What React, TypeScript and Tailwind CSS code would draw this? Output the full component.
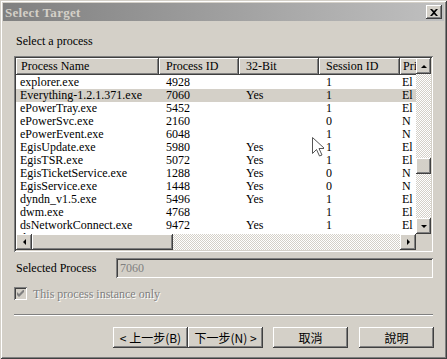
import React from 'react';

const rows = [
  ['explorer.exe', '4928', '', '1', 'El'],
  ['Everything-1.2.1.371.exe', '7060', 'Yes', '1', 'El'],
  ['ePowerTray.exe', '5452', '', '1', 'El'],
  ['ePowerSvc.exe', '2160', '', '0', 'N'],
  ['ePowerEvent.exe', '6048', '', '1', 'N'],
  ['EgisUpdate.exe', '5980', 'Yes', '1', 'El'],
  ['EgisTSR.exe', '5072', 'Yes', '1', 'El'],
  ['EgisTicketService.exe', '1288', 'Yes', '0', 'N'],
  ['EgisService.exe', '1448', 'Yes', '0', 'N'],
  ['dyndn_v1.5.exe', '5496', 'Yes', '1', 'El'],
  ['dwm.exe', '4768', '', '1', 'El'],
  ['dsNetworkConnect.exe', '9472', 'Yes', '1', 'El'],
  ['dsNetService.exe', '2100', 'Yes', '0', 'N'],
];

const raised =
  'bg-[#d4d0c8] shadow-[inset_-1px_-1px_#404040,inset_1px_1px_#ffffff,inset_-2px_-2px_#808080,inset_2px_2px_#d4d0c8]';
const sunken =
  'shadow-[inset_1px_1px_#808080,inset_-1px_-1px_#ffffff,inset_2px_2px_#404040,inset_-2px_-2px_#d4d0c8]';
const dither =
  'bg-[repeating-conic-gradient(#d4d0c8_0%_25%,#ffffff_0%_50%)] bg-[length:2px_2px]';

function Arrow({ dir }: { dir: 'up' | 'down' | 'left' | 'right' }) {
  const pts = {
    up: '4,1 1,4 7,4',
    down: '1,1 7,1 4,4',
    left: '4,1 4,7 1,4',
    right: '1,1 1,7 4,4',
  }[dir];
  const horiz = dir === 'left' || dir === 'right';
  return (
    <svg width={horiz ? 5 : 8} height={horiz ? 8 : 5} viewBox={horiz ? '0 0 5 8' : '0 0 8 5'}>
      <polygon points={pts} fill="#000" />
    </svg>
  );
}

function Btn({ children, className = '' }: { children: React.ReactNode; className?: string }) {
  return (
    <div className={`${raised} flex items-center justify-center w-[75px] h-[21px] text-[12px] text-black ${className}`}>
      {children}
    </div>
  );
}

export default function App() {
  const cols = 'grid grid-cols-[143px_80px_80px_81px_60px]';
  return (
    <div className="w-[447px] h-[359px] bg-[#d4d0c8] p-[3px] flex flex-col shadow-[inset_1px_1px_#d4d0c8,inset_-1px_-1px_#404040,inset_2px_2px_#ffffff,inset_-2px_-2px_#808080] font-['Liberation_Serif',serif] relative overflow-hidden">
      {/* title bar */}
      <div className="h-[18px] bg-linear-to-r from-[#808080] to-[#c0c0c0] flex items-center pl-[2px] pr-[2px]">
        <span className="text-[13px] font-bold text-[#d4d0c8] leading-none tracking-[0.3px]">Select Target</span>
        <div className={`${raised} ml-auto w-[16px] h-[14px] flex items-center justify-center`}>
          <svg width="8" height="7" viewBox="0 0 8 7">
            <path d="M0 0h2l2 2 2-2h2L5 3.5 8 7H6L4 5 2 7H0l3-3.5z" fill="#000" />
          </svg>
        </div>
      </div>

      <div className="flex flex-col px-[11px]">
        <div className="mt-[14px] h-[13px] leading-[13px] text-[12px] text-black pl-[2px]">Select a process</div>

        {/* list */}
        <div className={`mt-[8px] h-[196px] bg-white p-[2px] ${sunken} flex flex-col`}>
          <div className="flex h-[176px]">
            <div className="w-[400px] overflow-hidden">
              <div className={`${cols} h-[17px] text-[12px] text-black`}>
                {['Process Name', 'Process ID', '32-Bit', 'Session ID', 'Privilege'].map((h, i) => (
                  <div
                    key={h}
                    className={`${raised} h-[17px] leading-[17px] whitespace-nowrap overflow-hidden ${i === 0 ? 'pl-[5px]' : i === 4 ? 'pl-[3px]' : 'pl-[7px]'}`}
                  >
                    {h}
                  </div>
                ))}
              </div>
              <div className="mt-[1px] text-[12px] text-black">
                {rows.map((r, ri) => (
                  <div key={r[0]} className={`${cols} h-[13px] leading-[13px] ${ri === 1 ? 'bg-[#d4d0c8]' : ''}`}>
                    {r.map((c, i) => (
                      <div
                        key={i}
                        className={`whitespace-nowrap overflow-hidden ${i === 0 ? 'pl-[4px]' : i === 4 ? 'pl-[2px]' : 'pl-[7px]'}`}
                      >
                        {c}
                      </div>
                    ))}
                  </div>
                ))}
              </div>
            </div>
            {/* vertical scrollbar */}
            <div className="w-[15px] flex flex-col">
              <div className={`${raised} h-[16px] flex items-center justify-center`}>
                <Arrow dir="up" />
              </div>
              <div className={`h-[84px] ${dither}`} />
              <div className={`${raised} h-[16px]`} />
              <div className={`h-[44px] ${dither}`} />
              <div className={`${raised} h-[16px] flex items-center justify-center`}>
                <Arrow dir="down" />
              </div>
            </div>
          </div>
          {/* horizontal scrollbar */}
          <div className="flex h-[16px]">
            <div className={`${raised} w-[16px] flex items-center justify-center`}>
              <Arrow dir="left" />
            </div>
            <div className={`${raised} w-[141px]`} />
            <div className={`w-[227px] ${dither}`} />
            <div className={`${raised} w-[16px] flex items-center justify-center`}>
              <Arrow dir="right" />
            </div>
            <div className="w-[15px] bg-[#d4d0c8]" />
          </div>
        </div>

        {/* selected process */}
        <div className="mt-[6px] flex items-center h-[20px]">
          <span className="w-[102px] pl-[2px] text-[12px] text-black">Selected Process</span>
          <div className={`flex-1 h-[20px] ${sunken} pl-[4px] text-[12px] leading-[20px] text-[#808080]`}>7060</div>
        </div>

        {/* checkbox */}
        <div className="mt-[9px] flex items-center h-[13px]">
          <div className={`w-[13px] h-[13px] bg-[#d4d0c8] ${sunken} flex items-center justify-center`}>
            <svg width="7" height="7" viewBox="0 0 7 7">
              <path d="M0 2v3l2 2 5-5V-1L2 4z" fill="#808080" />
            </svg>
          </div>
          <span className="ml-[6px] text-[12px] text-[#808080] [text-shadow:1px_1px_0_#ffffff]">
            This process instance only
          </span>
        </div>

        {/* separator */}
        <div className="mt-[14px] h-[2px] border-t border-t-[#808080] border-b border-b-white" />

        {/* buttons */}
        <div className="mt-[11px] flex justify-end mr-[-1px] font-['Noto_Sans_CJK_TC','Liberation_Sans',sans-serif]">
          <Btn>&lt; 上一步(B)</Btn>
          <Btn>下一步(N) &gt;</Btn>
          <Btn className="ml-[10px]">取消</Btn>
          <Btn className="ml-[11px]">說明</Btn>
        </div>
      </div>

      {/* mouse pointer */}
      <svg className="absolute left-[312px] top-[137px]" width="12" height="20" viewBox="0 0 12 20">
        <path d="M0.5 0.5v16l4-4 3 6.5 2.5-1-3-6.5h5.5z" fill="#fff" stroke="#555" strokeWidth="1" />
      </svg>
    </div>
  );
}
